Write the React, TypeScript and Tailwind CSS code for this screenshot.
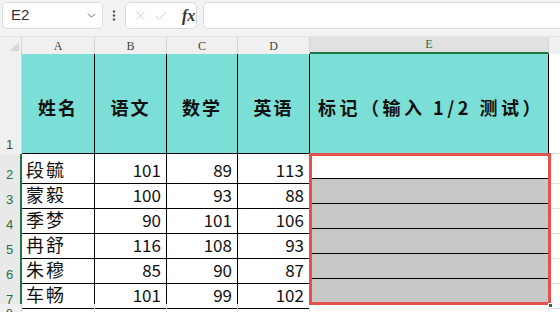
import React from 'react';
import { ChevronDown, EllipsisVertical, X, Check } from 'lucide-react';

const cols = ['A', 'B', 'C', 'D', 'E'];

const rows = [
  { name: '段毓', yw: 101, sx: 89, yy: 113 },
  { name: '蒙毅', yw: 100, sx: 93, yy: 88 },
  { name: '季梦', yw: 90, sx: 101, yy: 106 },
  { name: '冉舒', yw: 116, sx: 108, yy: 93 },
  { name: '朱穆', yw: 85, sx: 90, yy: 87 },
  { name: '车畅', yw: 101, sx: 99, yy: 102 },
];

const grid = 'grid grid-cols-[22px_73px_72px_71px_72px_239px_11px]';
const cjk = "font-['Noto_Sans_CJK_SC',sans-serif]";

const App = () => {
  return (
    <div className="w-[560px] h-[312px] overflow-hidden bg-white select-none">
      {/* 编辑栏 */}
      <div className="h-[37px] bg-[#f3f3f3] flex items-start pt-[2px] pl-[2px] gap-[4px] border-b border-[#e6e6e6]">
        <div className="w-[101px] h-[27px] bg-white border border-[#dcdcdc] rounded-[5px] flex items-center justify-between pl-[8px] pr-[4px]">
          <span className="text-[15px] text-[#333] font-['Liberation_Sans',sans-serif]">E2</span>
          <ChevronDown size={13} strokeWidth={1.6} className="text-[#555]" />
        </div>
        <div className="h-[27px] w-[14px] flex items-center justify-center">
          <EllipsisVertical size={15} strokeWidth={2.4} className="text-[#555]" />
        </div>
        <div className="w-[72px] h-[27px] bg-white border border-[#dcdcdc] rounded-[5px] flex items-center gap-[5px] pl-[7px]">
          <X size={15} strokeWidth={1.1} className="text-[#bdbdbd]" />
          <Check size={16} strokeWidth={1.1} className="text-[#bdbdbd]" />
          <span className="ml-[8px] italic font-bold text-[16px] text-[#333] font-['Liberation_Serif',serif]">fx</span>
        </div>
        <div className="ml-[2px] flex-1 h-[27px] bg-white border border-[#dcdcdc] rounded-l-[5px] border-r-0" />
      </div>

      <div className="relative">
        {/* 列标 */}
        <div className={`${grid} h-[17px] bg-[#f0f0f0]`}>
          <div className="relative border-r border-[#d4d4d4]">
            <div className="absolute right-[2px] bottom-[3px] w-0 h-0 border-l-[9px] border-l-transparent border-b-[9px] border-b-[#d6d6d6]" />
          </div>
          {cols.map((c) => (
            <div
              key={c}
              className={`flex items-end justify-center text-[12px] leading-[15px] font-['Liberation_Serif',serif] border-r border-[#d4d4d4] ${
                c === 'E' ? 'bg-[#e1e1e1] text-[#217346] border-b-2 border-b-[#217346]' : 'text-[#444]'
              }`}
            >
              {c}
            </div>
          ))}
          <div />
        </div>

        {/* 第 1 行 */}
        <div className={`${grid} h-[100px]`}>
          <div className="bg-[#f0f0f0] border-r border-[#d4d4d4] flex items-end pl-[6px] text-[13px] text-[#444] font-['Liberation_Sans',sans-serif]">
            1
          </div>
          {['姓名', '语文', '数学', '英语'].map((h) => (
            <div
              key={h}
              className={`bg-[#7cdfd7] border-r border-b border-black flex items-center justify-center pt-[8px] text-[18px] font-bold tracking-[2px] text-[#111] ${cjk}`}
            >
              {h}
            </div>
          ))}
          <div
            className={`bg-[#7cdfd7] border-r border-b border-black flex items-center pl-[8px] pt-[8px] text-[18px] font-bold tracking-[3.5px] text-[#111] ${cjk} whitespace-nowrap overflow-hidden`}
          >
            标记（输入 1/2 测试）
          </div>
          <div className="border-b border-[#e2e2e2]" />
        </div>

        {/* 数据行 */}
        {rows.map((r, i) => (
          <div key={r.name} className={`${grid} h-[25px]`}>
            <div className="bg-[#e9e9e9] border-r-2 border-[#217346] flex items-end pl-[6px] pb-[1px] text-[13px] leading-[17px] text-[#217346] font-['Liberation_Sans',sans-serif]">
              {i + 2}
            </div>
            <div className={`border-r border-b border-black flex items-center pl-[4px] pt-[2px] text-[18px] tracking-[2px] text-[#111] ${cjk}`}>
              {r.name}
            </div>
            {[r.yw, r.sx, r.yy].map((n, k) => (
              <div
                key={k}
                className={`border-r border-b border-black flex items-center justify-end pr-[5px] pt-[3px] text-[17px] text-[#111] ${cjk}`}
              >
                {n}
              </div>
            ))}
            <div
              className={`h-[25px] border-r border-b border-black text-[1px] ${i === 0 ? 'bg-white' : 'bg-[#c8c8c8]'}`}
            >
              &nbsp;
            </div>
            <div className="border-b border-[#e2e2e2]" />
          </div>
        ))}

        {/* 第 8 行 */}
        <div className={`${grid} h-[10px]`}>
          <div className="bg-[#f0f0f0] border-r border-[#d4d4d4] pl-[6px] pt-[3px] text-[12px] leading-[14px] text-[#444] font-['Liberation_Sans',sans-serif] overflow-hidden">
            8
          </div>
          {cols.map((c) => (
            <div key={c} className="border-r border-[#e2e2e2]" />
          ))}
          <div />
        </div>

        {/* 选区 */}
        <div className="absolute left-[309px] top-[116px] w-[242px] h-[152px] border-[3px] border-[#e5504c] pointer-events-none" />
        <div className="absolute left-[548px] top-[266px] w-[5px] h-[5px] bg-[#217346] border border-white" />
      </div>
    </div>
  );
};

export default App;
